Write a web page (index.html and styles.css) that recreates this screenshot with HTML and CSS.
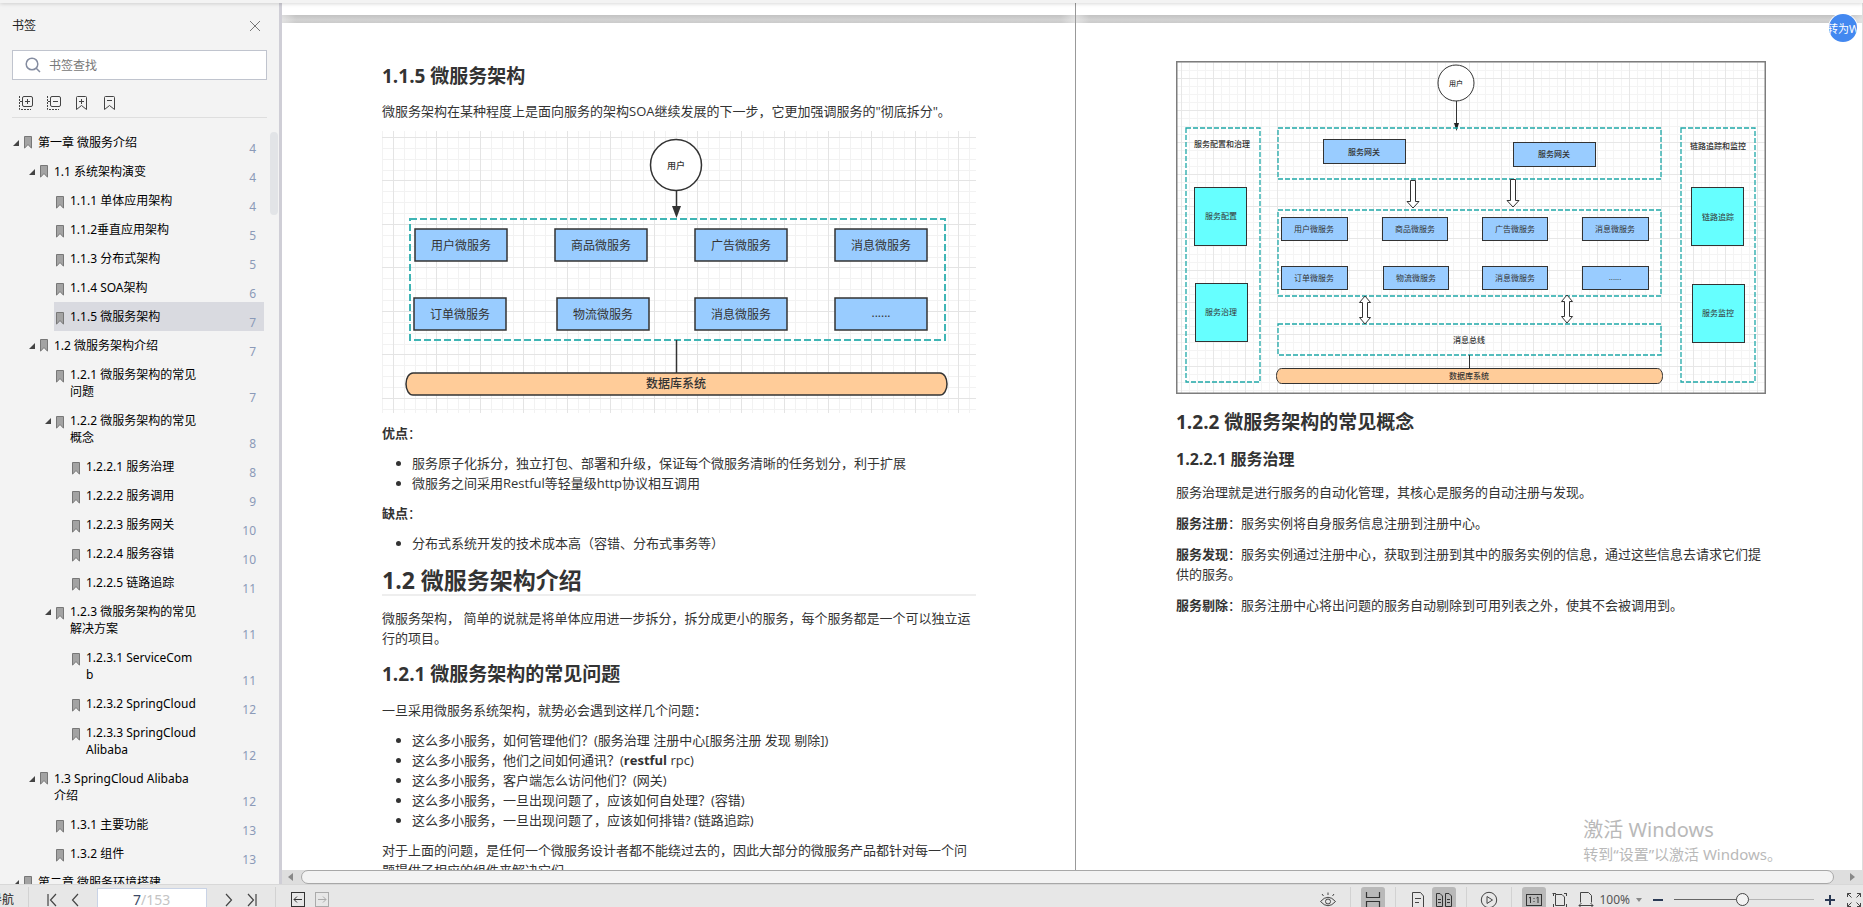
FILE: index.html
```html
<!DOCTYPE html>
<html lang="zh-CN">
<head>
<meta charset="utf-8">
<title>微服务架构</title>
<link rel="stylesheet" href="styles.css">
</head>
<body>
<div class="app">
  <div class="top-edge"></div>
  <div class="main">
    <aside class="sidebar">
      <header class="side-head">
        <h2 class="side-title">书签</h2>
        <button class="icon-btn" aria-label="关闭"><svg width="12" height="12" viewBox="0 0 12 12"><path d="M1 1L11 11M11 1L1 11" stroke="#777" fill="none"/></svg></button>
      </header>
      <label class="search">
        <svg width="16" height="16" viewBox="0 0 16 16" fill="none" stroke="#848ca0" stroke-width="1.5"><circle cx="7" cy="7" r="5.8"/><path d="M11.2 11.2L15 15"/></svg>
        <input class="search-input" type="text" placeholder="书签查找" aria-label="书签查找">
      </label>
      <div class="side-tools">
        <button class="icon-btn" aria-label="全部展开"><svg width="16" height="16" viewBox="0 0 16 16" fill="none" stroke="#444"><rect x="4.500" y="1.500" width="10" height="10" rx="1.500"/><path d="M7 6.500H12M9.500 4V9M2 6.500H4"/><path d="M1.500 1V14.500H13" stroke-dasharray="2 1"/></svg></button>
        <button class="icon-btn" aria-label="全部折叠"><svg width="16" height="16" viewBox="0 0 16 16" fill="none" stroke="#444"><rect x="4.500" y="1.500" width="10" height="10" rx="1.500"/><path d="M7 6.500H12M2 6.500H4"/><path d="M1.500 1V14.500H13" stroke-dasharray="2 1"/></svg></button>
        <button class="icon-btn" aria-label="添加书签"><svg width="16" height="16" viewBox="0 0 16 16" fill="none" stroke="#444"><path d="M2.500 14.500V2.500Q2.500 1.500 3.500 1.500H11.500Q12.500 1.500 12.500 2.500V14.500L7.500 10.500ZM5 6.500H10M7.500 4V9"/></svg></button>
        <button class="icon-btn" aria-label="删除书签"><svg width="16" height="16" viewBox="0 0 16 16" fill="none" stroke="#444"><path d="M2.500 14.500V2.500Q2.500 1.500 3.500 1.500H11.500Q12.500 1.500 12.500 2.500V14.500L7.500 10.500ZM5 5.500H10"/></svg></button>
      </div>
      <svg class="defs" width="0" height="0" aria-hidden="true">
        <symbol id="mark" viewBox="0 0 8 13"><path d="M.5 12.200V.5H7.500V12.200L4 8.500Z" fill="#a3a3a3" stroke="#777"/></symbol>
        <symbol id="tri" viewBox="0 0 6 6"><path d="M6 0V6H0Z" fill="#444"/></symbol>
      </svg>
      <div class="tree-wrap">
        <ul class="tree">
          <li class="row l0"><svg class="tri"><use href="#tri"/></svg><svg class="mark"><use href="#mark"/></svg><a class="name" href="#">第一章 微服务介绍</a><span class="num">4</span></li>
          <li class="row l1"><svg class="tri"><use href="#tri"/></svg><svg class="mark"><use href="#mark"/></svg><a class="name" href="#">1.1 系统架构演变</a><span class="num">4</span></li>
          <li class="row l2"><svg class="mark"><use href="#mark"/></svg><a class="name" href="#">1.1.1 单体应用架构</a><span class="num">4</span></li>
          <li class="row l2"><svg class="mark"><use href="#mark"/></svg><a class="name" href="#">1.1.2垂直应用架构</a><span class="num">5</span></li>
          <li class="row l2"><svg class="mark"><use href="#mark"/></svg><a class="name" href="#">1.1.3 分布式架构</a><span class="num">5</span></li>
          <li class="row l2"><svg class="mark"><use href="#mark"/></svg><a class="name" href="#">1.1.4 SOA架构</a><span class="num">6</span></li>
          <li class="row l2 selected"><svg class="mark"><use href="#mark"/></svg><a class="name" href="#">1.1.5 微服务架构</a><span class="num">7</span></li>
          <li class="row l1"><svg class="tri"><use href="#tri"/></svg><svg class="mark"><use href="#mark"/></svg><a class="name" href="#">1.2 微服务架构介绍</a><span class="num">7</span></li>
          <li class="row l2"><svg class="mark"><use href="#mark"/></svg><a class="name" href="#">1.2.1 微服务架构的常见问题</a><span class="num">7</span></li>
          <li class="row l2"><svg class="tri"><use href="#tri"/></svg><svg class="mark"><use href="#mark"/></svg><a class="name" href="#">1.2.2 微服务架构的常见概念</a><span class="num">8</span></li>
          <li class="row l3"><svg class="mark"><use href="#mark"/></svg><a class="name" href="#">1.2.2.1 服务治理</a><span class="num">8</span></li>
          <li class="row l3"><svg class="mark"><use href="#mark"/></svg><a class="name" href="#">1.2.2.2 服务调用</a><span class="num">9</span></li>
          <li class="row l3"><svg class="mark"><use href="#mark"/></svg><a class="name" href="#">1.2.2.3 服务网关</a><span class="num">10</span></li>
          <li class="row l3"><svg class="mark"><use href="#mark"/></svg><a class="name" href="#">1.2.2.4 服务容错</a><span class="num">10</span></li>
          <li class="row l3"><svg class="mark"><use href="#mark"/></svg><a class="name" href="#">1.2.2.5 链路追踪</a><span class="num">11</span></li>
          <li class="row l2"><svg class="tri"><use href="#tri"/></svg><svg class="mark"><use href="#mark"/></svg><a class="name" href="#">1.2.3 微服务架构的常见解决方案</a><span class="num">11</span></li>
          <li class="row l3"><svg class="mark"><use href="#mark"/></svg><a class="name" href="#">1.2.3.1 ServiceComb</a><span class="num">11</span></li>
          <li class="row l3"><svg class="mark"><use href="#mark"/></svg><a class="name" href="#">1.2.3.2 SpringCloud</a><span class="num">12</span></li>
          <li class="row l3"><svg class="mark"><use href="#mark"/></svg><a class="name" href="#">1.2.3.3 SpringCloud Alibaba</a><span class="num">12</span></li>
          <li class="row l1"><svg class="tri"><use href="#tri"/></svg><svg class="mark"><use href="#mark"/></svg><a class="name" href="#">1.3 SpringCloud Alibaba介绍</a><span class="num">12</span></li>
          <li class="row l2"><svg class="mark"><use href="#mark"/></svg><a class="name" href="#">1.3.1 主要功能</a><span class="num">13</span></li>
          <li class="row l2"><svg class="mark"><use href="#mark"/></svg><a class="name" href="#">1.3.2 组件</a><span class="num">13</span></li>
          <li class="row l0"><svg class="tri"><use href="#tri"/></svg><svg class="mark"><use href="#mark"/></svg><a class="name" href="#">第二章 微服务环境搭建</a></li>
        </ul>
        <div class="tree-thumb"></div>
      </div>
    </aside>

    <main class="viewer">
      <div class="pages">
        <div class="column left">
          <div class="prev"></div>
          <div class="gap"></div>
          <article class="page">
            <h3>1.1.5 微服务架构</h3>
            <p>微服务架构在某种程度上是面向服务的架构SOA继续发展的下一步，它更加强调服务的"彻底拆分"。</p>
            <figure>
              <svg class="diagram big" viewBox="0 0 594 282">
                <defs>
                  <pattern id="g1" x="11" y="6" width="87" height="87" patternUnits="userSpaceOnUse">
                    <path d="M11.500 0V87M22.500 0V87M33.500 0V87M54.500 0V87M65.500 0V87M76.500 0V87M0 11.500H87M0 22.500H87M0 33.500H87M0 54.500H87M0 65.500H87M0 76.500H87" stroke="#f2f2f2"/>
                    <path d="M.5 0V87M43.500 0V87M0 .5H87M0 43.500H87" stroke="#e4e4e4"/>
                  </pattern>
                </defs>
                <rect width="594" height="282" fill="url(#g1)"/>
                <circle cx="294" cy="34" r="25.500" fill="#fff" stroke="#333" stroke-width="1.500"/>
                <text class="user" x="294" y="38">用户</text>
                <path d="M294.500 60V78" stroke="#333" stroke-width="1.500"/><path d="M290 75H299L294.500 87Z" fill="#333"/>
                <rect x="28" y="88" width="535" height="121" fill="none" stroke="#3fb5b5" stroke-width="2" stroke-dasharray="7 3"/>
                <g fill="#99ccff" stroke="#333" stroke-width="1.500">
                  <rect x="33" y="98" width="92" height="32"/><rect x="173" y="98" width="92" height="32"/><rect x="313" y="98" width="92" height="32"/><rect x="453" y="98" width="92" height="32"/>
                  <rect x="32" y="167" width="92" height="32"/><rect x="175" y="167" width="92" height="32"/><rect x="313" y="167" width="92" height="32"/><rect x="453" y="167" width="92" height="32"/>
                </g>
                <g class="node">
                  <text x="79" y="119">用户微服务</text><text x="219" y="119">商品微服务</text><text x="359" y="119">广告微服务</text><text x="499" y="119">消息微服务</text>
                  <text x="78" y="188">订单微服务</text><text x="221" y="188">物流微服务</text><text x="359" y="188">消息微服务</text><text x="499" y="186">......</text>
                </g>
                <path d="M294.500 209V242" stroke="#333" stroke-width="1.500"/>
                <rect x="24" y="242" width="541" height="22" rx="7" ry="11" fill="#ffcc99" stroke="#333" stroke-width="1.500"/>
                <text class="base" x="294" y="257">数据库系统</text>
              </svg>
            </figure>
            <p><strong>优点</strong>：</p>
            <ul>
              <li>服务原子化拆分，独立打包、部署和升级，保证每个微服务清晰的任务划分，利于扩展</li>
              <li>微服务之间采用Restful等轻量级http协议相互调用</li>
            </ul>
            <p><strong>缺点</strong>：</p>
            <ul>
              <li>分布式系统开发的技术成本高（容错、分布式事务等）</li>
            </ul>
            <h2>1.2 微服务架构介绍</h2>
            <p>微服务架构， 简单的说就是将单体应用进一步拆分，拆分成更小的服务，每个服务都是一个可以独立运行的项目。</p>
            <h3>1.2.1 微服务架构的常见问题</h3>
            <p>一旦采用微服务系统架构，就势必会遇到这样几个问题：</p>
            <ul>
              <li>这么多小服务，如何管理他们？(服务治理 注册中心[服务注册 发现 剔除])</li>
              <li>这么多小服务，他们之间如何通讯？(<strong>restful</strong> rpc)</li>
              <li>这么多小服务，客户端怎么访问他们？(网关)</li>
              <li>这么多小服务，一旦出现问题了，应该如何自处理？(容错)</li>
              <li>这么多小服务，一旦出现问题了，应该如何排错? (链路追踪)</li>
            </ul>
            <p>对于上面的问题，是任何一个微服务设计者都不能绕过去的，因此大部分的微服务产品都针对每一个问题提供了相应的组件来解决它们。</p>
          </article>
        </div>
        <div class="column right">
          <div class="prev"></div>
          <div class="gap"></div>
          <article class="page">
            <figure>
              <svg class="diagram small" viewBox="0 0 590 333">
                <defs>
                  <pattern id="g2" x="5" y="17" width="32" height="32" patternUnits="userSpaceOnUse">
                    <path d="M8.500 0V32M16.500 0V32M24.500 0V32M0 8.500H32M0 16.500H32M0 24.500H32" stroke="#f4f4f4"/>
                    <path d="M.5 0V32M0 .5H32" stroke="#e7e7e7"/>
                  </pattern>
                </defs>
                <rect width="590" height="333" fill="url(#g2)"/>
                <rect x=".75" y=".75" width="588.500" height="331.500" fill="none" stroke="#7d7d7d" stroke-width="1.500"/>
                <circle cx="280" cy="22" r="18" fill="#fff" stroke="#333"/>
                <text class="user" x="280" y="25">用户</text>
                <path d="M280.500 40V64" stroke="#333"/><path d="M278 62H283L280.500 70Z" fill="#222"/>
                <g fill="none" stroke="#1fa8a8" stroke-width="1.300" stroke-dasharray="5 2">
                  <rect x="10" y="67" width="74" height="254"/><rect x="505" y="67" width="74" height="254"/>
                  <rect x="102" y="67" width="383" height="51"/><rect x="102" y="149" width="383" height="86"/><rect x="102" y="263" width="383" height="31"/>
                </g>
                <g fill="#99ccff" stroke="#333">
                  <rect x="147.500" y="78.500" width="82" height="24"/><rect x="337.500" y="81.500" width="82" height="24"/>
                  <rect x="105.500" y="156.500" width="66" height="23"/><rect x="206.500" y="156.500" width="65" height="23"/><rect x="306.500" y="156.500" width="65" height="23"/><rect x="406.500" y="156.500" width="66" height="23"/>
                  <rect x="105.500" y="205.500" width="66" height="23"/><rect x="207.500" y="205.500" width="65" height="23"/><rect x="306.500" y="205.500" width="65" height="23"/><rect x="406.500" y="205.500" width="66" height="23"/>
                </g>
                <g fill="#66ffff" stroke="#333">
                  <rect x="18.500" y="126.500" width="52" height="58"/><rect x="19.500" y="222.500" width="52" height="58"/>
                  <rect x="515.500" y="126.500" width="52" height="58"/><rect x="516.500" y="223.500" width="52" height="58"/>
                </g>
                <g fill="#fff" stroke="#333">
                  <path d="M234.500 119.500H239.500V140.500H243L237 147L231 140.500H234.500Z"/>
                  <path d="M334.500 118.500H339.500V139.500H343L337 146L331 139.500H334.500Z"/>
                  <path d="M189 235L194.500 241.500H191.500V256.500H194.500L189 263L183.500 256.500H186.500V241.500H183.500Z"/>
                  <path d="M391 234L396.500 240.500H393.500V255.500H396.500L391 262L385.500 255.500H388.500V240.500H385.500Z"/>
                </g>
                <g class="bold">
                  <text x="46" y="86">服务配置和治理</text><text x="542" y="88">链路追踪和监控</text>
                  <text x="188" y="94">服务网关</text><text x="378" y="96">服务网关</text>
                  <text x="293" y="282">消息总线</text>
                </g>
                <g class="node">
                  <text x="45" y="158">服务配置</text><text x="45" y="254">服务治理</text><text x="542" y="159">链路追踪</text><text x="542" y="255">服务监控</text>
                  <text x="138" y="171">用户微服务</text><text x="239" y="171">商品微服务</text><text x="339" y="171">广告微服务</text><text x="439" y="171">消息微服务</text>
                  <text x="138" y="220">订单微服务</text><text x="240" y="220">物流微服务</text><text x="339" y="220">消息微服务</text><text x="439" y="219">......</text>
                </g>
                <path d="M293.500 294V307" stroke="#333"/>
                <rect x="100.500" y="307.500" width="386" height="15" rx="5" ry="7" fill="#ffcc99" stroke="#333"/>
                <g class="bold"><text x="293" y="318">数据库系统</text></g>
              </svg>
            </figure>
            <h3>1.2.2 微服务架构的常见概念</h3>
            <h4>1.2.2.1 服务治理</h4>
            <p>服务治理就是进行服务的自动化管理，其核心是服务的自动注册与发现。</p>
            <p><strong>服务注册</strong>：服务实例将自身服务信息注册到注册中心。</p>
            <p><strong>服务发现</strong>：服务实例通过注册中心，获取到注册到其中的服务实例的信息，通过这些信息去请求它们提供的服务。</p>
            <p><strong>服务剔除</strong>：服务注册中心将出问题的服务自动剔除到可用列表之外，使其不会被调用到。</p>
          </article>
        </div>
        <button class="convert">转为W</button>
        <div class="watermark"><div class="wm-title">激活 Windows</div><div class="wm-text">转到“设置”以激活 Windows。</div></div>
      </div>
      <div class="hscroll">
        <svg width="5" height="8" viewBox="0 0 5 8"><path d="M5 0V8L0 4Z" fill="#888"/></svg>
        <div class="hthumb"></div>
        <svg width="5" height="8" viewBox="0 0 5 8"><path d="M0 0V8L5 4Z" fill="#888"/></svg>
      </div>
    </main>
  </div>

  <footer class="status">
    <div class="nav">
      <button class="nav-label">导航</button>
      <i class="sep"></i>
      <div class="pager">
        <button class="icon-btn" aria-label="首页"><svg width="10" height="14" viewBox="0 0 10 14" fill="none" stroke="#444" stroke-width="1.200"><path d="M1 1V13M9 1L3.500 7L9 13"/></svg></button>
        <button class="icon-btn" aria-label="上一页"><svg width="8" height="14" viewBox="0 0 8 14" fill="none" stroke="#444" stroke-width="1.200"><path d="M7 1L1.500 7L7 13"/></svg></button>
        <div class="page-box"><input class="page-input" type="text" value="7" aria-label="页码"><span class="page-total">/153</span></div>
        <button class="icon-btn" aria-label="下一页"><svg width="8" height="14" viewBox="0 0 8 14" fill="none" stroke="#444" stroke-width="1.200"><path d="M1 1L6.500 7L1 13"/></svg></button>
        <button class="icon-btn" aria-label="末页"><svg width="10" height="14" viewBox="0 0 10 14" fill="none" stroke="#444" stroke-width="1.200"><path d="M9 1V13M1 1L6.500 7L1 13"/></svg></button>
      </div>
      <i class="sep"></i>
      <div class="history">
        <button class="icon-btn" aria-label="后退"><svg width="14" height="15" viewBox="0 0 14 15" fill="none" stroke="#333"><rect x=".5" y=".5" width="13" height="14"/><path d="M3 7.500H11M6 4.500L3 7.500L6 10.500"/></svg></button>
        <button class="icon-btn" aria-label="前进"><svg width="14" height="15" viewBox="0 0 14 15" fill="none" stroke="#aaa"><rect x=".5" y=".5" width="13" height="14"/><path d="M3 7.500H11M8 4.500L11 7.500L8 10.500"/></svg></button>
      </div>
    </div>
    <div class="tools">
      <button class="tool" aria-label="护眼"><svg width="16" height="16" viewBox="0 0 16 16" fill="none" stroke="#444"><path d="M.5 9.500Q8 1 15.500 9.500Q8 18 .5 9.500Z"/><circle cx="8" cy="9.500" r="2.500"/><path d="M8 3V.5M3.500 4L2 2M12.500 4L14 2"/></svg></button>
      <i class="sep"></i>
      <button class="tool on" aria-label="连续"><svg width="16" height="18" viewBox="0 0 16 18" fill="none" stroke="#333" stroke-width="1.200"><path d="M1.500 1V6.500H14.500V1M1.500 18V10.500H14.500V18"/></svg></button>
      <i class="sep"></i>
      <div class="pair">
        <button class="tool" aria-label="单页"><svg width="14" height="16" viewBox="0 0 14 16" fill="none" stroke="#444"><path d="M1.500 .5H9.500L12.500 4V15.500H1.500ZM4 6.500H10M4 10.500H8"/></svg></button>
        <button class="tool on" aria-label="双页"><svg width="18" height="16" viewBox="0 0 18 16" fill="none" stroke="#333"><path d="M1.500 1.500H5L7.500 4V14.500H1.500ZM10.500 1.500H14L16.500 4V14.500H10.500ZM3 7.500H6M3 10.500H6M12 7.500H15M12 10.500H15"/></svg></button>
      </div>
      <i class="sep"></i>
      <button class="tool" aria-label="播放"><svg width="18" height="18" viewBox="0 0 18 18" fill="none" stroke="#444"><circle cx="9" cy="9" r="7.700"/><path d="M7 5.500L12.500 9L7 12.500Z"/></svg></button>
      <i class="sep"></i>
      <div class="fit-group">
        <div class="pair">
          <button class="tool on" aria-label="实际大小"><svg width="16" height="14" viewBox="0 0 16 14" fill="none" stroke="#333"><rect x=".5" y="1.500" width="15" height="11"/><path d="M3 5L4.500 4V10M10.500 5L12 4V10M8 5V6M8 8V9"/></svg></button>
          <button class="tool" aria-label="适合页面"><svg width="16" height="16" viewBox="0 0 16 16" fill="none" stroke="#444"><path d="M3.500 2.500H10L12.500 5V13.500H3.500ZM1.500 4V1M14.500 1V4M1 15.500H4M1.500 12V15M14.500 12V15.500H11.500M.5 1.500H4M12 1.500H15"/></svg></button>
          <button class="tool" aria-label="适合宽度"><svg width="16" height="16" viewBox="0 0 16 16" fill="none" stroke="#444"><path d="M2.500 10.500V.5H10.500L13.500 3.500V10.500M1 13.500H15M3.500 11L1 13.500L3.500 16M12.500 11L15 13.500L12.500 16"/></svg></button>
        </div>
        <button class="zoom-level">100% <svg width="6" height="4" viewBox="0 0 6 4"><path d="M0 0H6L3 4Z" fill="#888"/></svg></button>
      </div>
      <button class="icon-btn" aria-label="缩小"><svg width="12" height="12" viewBox="0 0 12 12"><path d="M1 6H11" stroke="#2b3a55" stroke-width="2"/></svg></button>
      <input class="slider" type="range" min="0" max="100" value="49" aria-label="缩放">
      <button class="icon-btn" aria-label="放大"><svg width="12" height="12" viewBox="0 0 12 12"><path d="M1 6H11M6 1V11" stroke="#2b3a55" stroke-width="2"/></svg></button>
      <button class="icon-btn" aria-label="全屏"><svg width="16" height="16" viewBox="0 0 16 16" fill="none" stroke="#444"><path d="M1.500 5V1.500H5M1.500 1.500L5.500 5.500M11 1.500H14.500V5M14.500 1.500L10.500 5.500M1.500 11V14.500H5M1.500 14.500L5.500 10.500M11 14.500H14.500V11M14.500 14.500L10.500 10.500"/></svg></button>
    </div>
  </footer>
</div>
</body>
</html>
```
FILE: styles.css
```css
* { box-sizing: border-box; }

body {
  margin: 0;
  height: 100vh;
  overflow: hidden;
  font: 12px/17px "Noto Sans", "Noto Sans CJK SC", sans-serif;
  color: #222;
  background: #f3f3f3;
}

button {
  border: 0;
  padding: 0;
  background: none;
  font: inherit;
  color: inherit;
}

svg { display: block; flex: none; }
.defs { position: absolute; }

/* The status bar runs past the lower edge of the window. */
.app {
  display: flex;
  flex-direction: column;
  height: calc(100vh + 7px);
}

.top-edge {
  height: 3px;
  background: #f3f3f3;
  box-shadow: 0 0 4px rgba(0, 0, 0, 0.25);
  z-index: 1;
}

.main { flex: 1; min-height: 0; display: flex; }

.icon-btn { display: grid; place-items: center; }

/* Sidebar */
.sidebar {
  flex: none;
  width: 282px;
  display: flex;
  flex-direction: column;
  border-right: 3px solid #cfced6;
  background: #f3f3f3;
}

.side-head {
  display: flex;
  justify-content: space-between;
  align-items: center;
  padding: 14px 18px 14px 12px;
}

.side-title { margin: 0; font-size: 12px; font-weight: 400; line-height: 18px; }

.search {
  display: flex;
  align-items: center;
  gap: 8px;
  height: 30px;
  margin: 1px 12px 0;
  padding: 0 12px;
  border: 1px solid #c0c4ce;
  background: #fff;
}

.search-input {
  flex: 1;
  min-width: 0;
  border: 0;
  padding: 0;
  outline: 0;
  background: none;
  font: inherit;
}
.search-input::placeholder { color: #777; }

.side-tools {
  display: flex;
  gap: 12px;
  margin: 0 12px;
  padding: 15px 6px 6px;
  border-bottom: 1px solid #dedede;
}

.tree-wrap { position: relative; flex: 1; min-height: 0; overflow: hidden; padding-top: 10px; }
.tree { list-style: none; margin: 0; padding: 0; }

.row {
  display: flex;
  align-items: flex-start;
  margin-right: 15px;
  padding: 6px 8px 6px 2px;
  position: relative;
}
.l0 { margin-left: 22px; }
.l1 { margin-left: 38px; }
.l2 { margin-left: 54px; }
.l3 { margin-left: 70px; }
.selected { background: #d9dae0; }

.tri { position: absolute; left: -9px; top: 12px; width: 6px; height: 6px; }
.mark { width: 8px; height: 13px; margin: 2px 6px 0 0; }
.l2 .mark, .l3 .mark { margin-top: 4px; }

.name {
  flex: 1;
  margin-right: 30px;
  color: #000;
  text-decoration: none;
  word-break: break-all;
}

.num {
  flex: none;
  align-self: flex-end;
  width: 27px;
  margin-bottom: -6px;
  text-align: right;
  color: #8b9ab8;
}

.tree-thumb {
  position: absolute;
  right: 1px;
  top: 14px;
  width: 8px;
  height: 83px;
  border-radius: 4px;
  background: #e2e4e7;
}

/* Document */
.viewer { flex: 1; min-width: 0; display: flex; flex-direction: column; }

.pages {
  position: relative;
  flex: 1;
  min-height: 0;
  overflow: hidden;
  display: grid;
  grid-template-columns: 794fr 787fr;
  grid-template-rows: minmax(0, 1fr);
}

.column {
  display: flex;
  flex-direction: column;
  min-height: 0;
  min-width: 0;
  background: #fff;
}
.left { border-right: 1px solid #999; }
.right { border-right: 1px solid #ddd; }

.prev { flex: none; height: 12px; }
.gap {
  flex: none;
  height: 8px;
  background:
    linear-gradient(90deg, rgba(255, 255, 255, 0.4), transparent 14px, transparent calc(100% - 14px), rgba(255, 255, 255, 0.4)),
    linear-gradient(#c2c2c2, #d2d2d2 60%, #cbcbcb);
}

.page {
  padding: 39px 99px 0 100px;
  font-family: "Open Sans", "Noto Sans CJK SC", sans-serif;
  font-size: 13px;
  line-height: 20px;
  color: #333;
}
.right .page { padding: 38px 96px 0 100px; }

.page p, .page ul { margin: 10px 0; }
.page ul { padding-left: 30px; }

.page h2 {
  margin: 13px 0 12px;
  border-bottom: 2px solid #eee;
  font-size: 23px;
  line-height: 28px;
}
.page h3 { margin: 12px 0; font-size: 19px; line-height: 28px; }
.page h3:first-child { margin: 0 0 11px; }
.page h4 { margin: 12px 0; font-size: 16px; line-height: 22px; }

.page figure { margin: 10px 0; }
.right .page figure { margin: 0 0 14px; }
.right .page p { margin: 11px 0; }

.diagram { width: 100%; height: auto; }
.diagram text { text-anchor: middle; fill: #333; }
.big .user { font-size: 9px; font-weight: 500; }
.big .node { font-size: 12px; }
.big .base { font-size: 12px; font-weight: 500; }
.small text { font-size: 8px; }
.small .user { font-size: 7px; font-weight: 500; }
.small .bold { font-weight: 500; }

.convert {
  position: absolute;
  top: 11px;
  right: 6px;
  width: 28px;
  height: 28px;
  border-radius: 50%;
  overflow: hidden;
  background: #4388f0;
  box-shadow: 0 0 0 1px #fff;
  color: #fff;
  font-size: 11px;
  white-space: nowrap;
  display: flex;
  align-items: center;
  justify-content: center;
}

.watermark { position: absolute; right: 81px; bottom: 5px; color: #b9b9b9; }
.wm-title { font-size: 20px; line-height: 26px; }
.wm-text { font-size: 15px; line-height: 22px; }

.hscroll {
  flex: none;
  display: flex;
  align-items: center;
  justify-content: space-between;
  height: 14px;
  padding: 0 8px 0 6px;
  background: #dedede;
}
.hthumb {
  flex: 1;
  height: 14px;
  margin: 0 16px 0 8px;
  border: 1px solid #a8a8a8;
  border-radius: 7px;
  background: #f3f3f3;
}

/* Status bar */
.status {
  flex: none;
  display: flex;
  justify-content: space-between;
  height: 30px;
  background: #e7e7e7;
  border-top: 1px solid #d8d8d8;
}
.nav, .tools, .pager, .history, .pair, .fit-group { display: flex; align-items: center; }

.sep { flex: none; width: 1px; height: 26px; background: #d2d2d2; }

.nav-label { width: 14px; margin-right: 14px; display: flex; justify-content: flex-end; white-space: nowrap; overflow: hidden; }

.pager { gap: 14px; padding: 0 18px; }
.page-box {
  display: flex;
  align-items: center;
  width: 110px;
  height: 24px;
  margin: 0 4px;
  border: 1px solid #c9d3e6;
  background: #fff;
  font-size: 14px;
  line-height: 20px;
}
.page-input {
  width: 43px;
  border: 0;
  padding: 0;
  outline: 0;
  background: none;
  font: inherit;
  text-align: right;
  color: #3c4a66;
}
.page-total { color: #c4c4c4; }

.history { gap: 10px; padding-left: 15px; }

.tools { gap: 10px; padding-right: 1px; }
.pair { gap: 2px; }
.tool {
  display: grid;
  place-items: center;
  width: 24px;
  height: 26px;
  border-radius: 3px;
}
.on { background: #b9b9b9; }

.zoom-level { display: flex; align-items: center; gap: 6px; margin-left: 1px; color: #555; }

.slider {
  appearance: none;
  width: 140px;
  height: 14px;
  margin: 0;
  background: linear-gradient(90deg, #666 50%, #b5b5b5 50%) center / 100% 1px no-repeat;
}
.slider::-webkit-slider-thumb {
  appearance: none;
  width: 13px;
  height: 13px;
  border: 1px solid #444;
  border-radius: 50%;
  background: #f3f3f3;
}
```
